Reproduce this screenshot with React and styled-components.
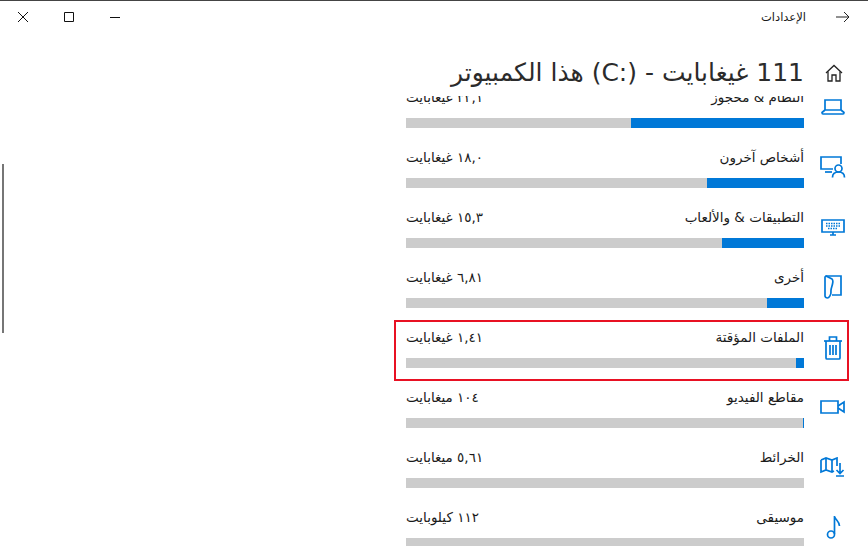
import React from 'react';
import styled, { createGlobalStyle } from 'styled-components';

const GlobalStyle = createGlobalStyle`
  html, body {
    margin: 0;
    padding: 0;
    background: #fff;
    overflow: hidden;
  }
`;

const Window = styled.div`
  position: relative;
  direction: rtl;
  width: 868px;
  height: 546px;
  overflow: hidden;
  box-sizing: border-box;
  border-top: 1px solid #444;
  display: flex;
  flex-direction: column;
  background: #fff;
  color: #1a1a1a;
  font-family: "DejaVu Sans", sans-serif;
`;

const TitleBar = styled.div`
  height: 31px;
  flex: none;
  display: flex;
  align-items: center;
  justify-content: space-between;
`;

const TitleGroup = styled.div`
  display: flex;
  align-items: center;
`;

const BackButton = styled.div`
  width: 50px;
  padding-left: 12px;
  display: flex;
  align-items: center;
  justify-content: center;
`;

const TitleText = styled.span`
  font-size: 11.5px;
  line-height: 20px;
`;

const Controls = styled.div`
  display: flex;
  direction: ltr;
`;

const ControlButton = styled.div`
  width: 46px;
  height: 31px;
  display: flex;
  align-items: center;
  justify-content: center;
`;

const Header = styled.div`
  height: 64px;
  flex: none;
  display: flex;
  align-items: center;
  padding-top: 17px;
  box-sizing: border-box;
`;

const HomeCell = styled.div`
  width: 64px;
  flex: none;
  display: flex;
  justify-content: center;
  padding-right: 5px;
  box-sizing: border-box;
`;

const PageTitle = styled.h1`
  margin: 0;
  font-size: 25px;
  font-weight: 400;
  line-height: 36px;
  white-space: nowrap;
  color: #2b2b2b;
`;

const Scroller = styled.div`
  flex: 1;
  overflow: hidden;
`;

const List = styled.div`
  margin-top: -15px;
  padding-right: 21px;
  width: 451px;
`;

const Row = styled.div`
  position: relative;
  height: 60px;
  box-sizing: border-box;
  display: flex;
  align-items: center;

  ${(p) =>
    p.$selected &&
    `&::after {
      content: '';
      position: absolute;
      top: -1px;
      bottom: 0;
      left: -2px;
      right: -2px;
      border: 2px solid #e81123;
    }`}
`;

const IconCell = styled.div`
  width: 43px;
  flex: none;
  display: flex;
  justify-content: center;
  padding-left: 14px;
  padding-bottom: 8px;
  box-sizing: border-box;
`;

const Content = styled.div`
  width: 398px;
  flex: none;
  height: 60px;
  box-sizing: border-box;
  padding-top: 6px;
`;

const Labels = styled.div`
  height: 31px;
  display: flex;
  justify-content: space-between;
  font-size: 13.5px;
  line-height: 20px;
  white-space: nowrap;
`;

const Track = styled.div`
  height: 10px;
  background: #ccc;
`;

const Fill = styled.div`
  height: 100%;
  background: #0078d7;
`;

const ScrollThumb = styled.div`
  position: absolute;
  left: 2px;
  top: 163px;
  width: 2px;
  height: 169px;
  background: #767676;
`;

const BLUE = '#0078d7';

const Svg = ({ w, h, children, color = BLUE, sw = 1.7 }) => (
  <svg width={w} height={h} viewBox={`0 0 ${w} ${h}`} fill="none" stroke={color} strokeWidth={sw}>
    {children}
  </svg>
);

const icons = {
  laptop: (
    <Svg w={24} h={16}>
      <path d="M4 1h16v10H4z" />
      <path d="M4 11l-3 2.5c0 1 .5 1.5 1 1.5h20c.5 0 1-.5 1-1.5L20 11" />
    </Svg>
  ),
  person: (
    <Svg w={26} h={22}>
      <path d="M13 13H1V1h20v7" />
      <path d="M5 16h7" />
      <circle cx="18.5" cy="12.5" r="3.5" />
      <path d="M12.5 21.5c0-3.5 2.5-5.5 6-5.5s6 2 6 5.5" />
    </Svg>
  ),
  keyboard: (
    <Svg w={24} h={17}>
      <path d="M1 1h22v12H1z" />
      <path d="M9 16h6M12 13v3" />
      <path d="M5 4.5h14M5 7h14M7 9.5h10" strokeDasharray="1.5 1" />
    </Svg>
  ),
  folder: (
    <Svg w={18} h={24}>
      <path d="M2 1h15v19H8" />
      <path d="M2 1l6 3c1 1 1 3 .5 5-.5 3-2 5-1.5 8 0 3-2 6-3.5 6C2 23 1 22 1 21V2z" />
    </Svg>
  ),
  trash: (
    <Svg w={20} h={25}>
      <path d="M1 6h18" />
      <path d="M6.5 6V2h7v4" />
      <path d="M3 6v17c0 .6.4 1 1 1h12c.6 0 1-.4 1-1V6" />
      <path d="M7 10v10M10 10v10M13 10v10" />
    </Svg>
  ),
  video: (
    <Svg w={25} h={14}>
      <path d="M1 1h17v12H1z" />
      <path d="M18 6l6-4v10l-6-4" />
    </Svg>
  ),
  map: (
    <Svg w={25} h={20}>
      <path d="M1 3l5-2 6 2 5-2v8M12 3v12M6 1v12M1 3v12l5-2 6 2 2-1" />
      <path d="M20 6v10M16.5 13l3.5 3.5 3.5-3.5M16 19h8" />
    </Svg>
  ),
  music: (
    <Svg w={16} h={24}>
      <circle cx="6" cy="19.5" r="3.5" />
      <path d="M9.5 19V1c.5 4 5 5 5 10" />
    </Svg>
  ),
};

const rows = [
  { icon: 'laptop', name: 'النظام & محجوز', size: '٣٢,١ غيغابايت', fill: 173 },
  { icon: 'person', name: 'أشخاص آخرون', size: '١٨,٠ غيغابايت', fill: 97 },
  { icon: 'keyboard', name: 'التطبيقات & والألعاب', size: '١٥,٣ غيغابايت', fill: 82 },
  { icon: 'folder', name: 'أخرى', size: '٦,٨١ غيغابايت', fill: 37 },
  { icon: 'trash', name: 'الملفات المؤقتة', size: '١,٤١ غيغابايت', fill: 8, selected: true },
  { icon: 'video', name: 'مقاطع الفيديو', size: '١٠٤ ميغابايت', fill: 1 },
  { icon: 'map', name: 'الخرائط', size: '٥,٦١ ميغابايت', fill: 0 },
  { icon: 'music', name: 'موسيقى', size: '١١٢ كيلوبايت', fill: 0 },
];

const App = () => (
  <>
    <GlobalStyle />
    <Window>
      <TitleBar>
        <TitleGroup>
          <BackButton>
            <Svg w={14} h={12} color="#222" sw={1}>
              <path d="M0 6h13M8 1l5 5-5 5" />
            </Svg>
          </BackButton>
          <TitleText>الإعدادات</TitleText>
        </TitleGroup>
        <Controls>
          <ControlButton>
            <Svg w={10} h={10} color="#111" sw={1}>
              <path d="M0 0l10 10M10 0L0 10" />
            </Svg>
          </ControlButton>
          <ControlButton>
            <Svg w={10} h={10} color="#111" sw={1}>
              <path d="M.5.5h9v9h-9z" />
            </Svg>
          </ControlButton>
          <ControlButton>
            <Svg w={10} h={10} color="#111" sw={1}>
              <path d="M0 5.5h10" />
            </Svg>
          </ControlButton>
        </Controls>
      </TitleBar>
      <Header>
        <HomeCell>
          <Svg w={18} h={18} color="#222" sw={1.3}>
            <path d="M1 9l8-7.5L17 9" />
            <path d="M3 7.5V17h4v-6h4v6h4V7.5" />
          </Svg>
        </HomeCell>
        <PageTitle>
          111 غيغابايت - <bdi dir="ltr">(C:)</bdi> هذا الكمبيوتر
        </PageTitle>
      </Header>
      <Scroller>
        <List>
          {rows.map((row) => (
            <Row key={row.icon} $selected={row.selected}>
              <IconCell>{icons[row.icon]}</IconCell>
              <Content>
                <Labels>
                  <span>{row.name}</span>
                  <span>{row.size}</span>
                </Labels>
                <Track>
                  <Fill style={{ width: row.fill }} />
                </Track>
              </Content>
            </Row>
          ))}
        </List>
      </Scroller>
      <ScrollThumb />
    </Window>
  </>
);

export default App;
